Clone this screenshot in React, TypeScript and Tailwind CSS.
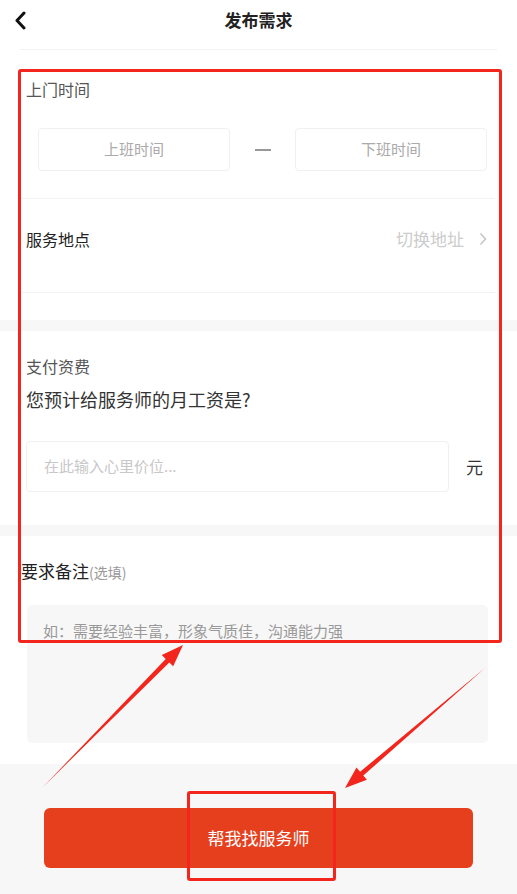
import React from 'react';

const font = { fontFamily: '"Noto Sans CJK SC", "Noto Sans", sans-serif' };

const App: React.FC = () => {
  return (
    <div className="relative w-[517px] h-[894px] bg-white overflow-hidden" style={font}>
      {/* Header */}
      <div className="relative h-[40px] flex items-center justify-center">
        <svg className="absolute left-[13px] top-[11px]" width="15" height="19" viewBox="0 0 15 19">
          <path d="M11 2 L4 9.5 L11 17" fill="none" stroke="#111" strokeWidth="3" strokeLinecap="round" strokeLinejoin="round" />
        </svg>
        <span className="text-[17px] font-bold text-[#222]">发布需求</span>
      </div>
      <div className="mt-[9px] mx-5 h-px bg-[#f2f2f2]" />

      {/* Visit time */}
      <div className="px-[26px] pt-[28px] text-[16px] leading-[22px] text-[#555]">上门时间</div>
      <div className="flex items-center pl-[38px] pr-[30px] mt-[28px]">
        <div className="w-[192px] h-[43px] rounded-[4px] border border-[#f0f0f0] flex items-center justify-center text-[15px] text-[#aaa]">
          上班时间
        </div>
        <div className="flex-1 flex justify-center">
          <div className="w-[16px] h-[2px] bg-[#999]" />
        </div>
        <div className="w-[192px] h-[43px] rounded-[4px] border border-[#f0f0f0] flex items-center justify-center text-[15px] text-[#aaa]">
          下班时间
        </div>
      </div>
      <div className="mt-[27px] mx-[22px] h-px bg-[#f2f2f2]" />

      {/* Location */}
      <div className="h-[93px] flex items-center justify-between pl-[26px] pr-[30px] pb-[13px]">
        <span className="text-[16px] text-[#222]">服务地点</span>
        <div className="flex items-center gap-[15px]">
          <span className="text-[17px] text-[#cccccc]">切换地址</span>
          <svg width="8" height="14" viewBox="0 0 8 14">
            <path d="M1.5 1.5 L6.5 7 L1.5 12.5" fill="none" stroke="#c4c4c4" strokeWidth="1.5" />
          </svg>
        </div>
      </div>
      <div className="mx-[22px] h-px bg-[#f2f2f2]" />
      <div className="h-[27px]" />
      <div className="h-[11px] bg-[#f7f7f7]" />

      {/* Payment */}
      <div className="px-[26px] pt-[24px] text-[16px] leading-[22px] text-[#555]">支付资费</div>
      <div className="px-[26px] mt-[10px] text-[18px] leading-[24px] text-[#333]">您预计给服务师的月工资是?</div>
      <div className="flex items-center pl-[26px] pr-[34px] mt-[30px]">
        <div className="w-[423px] h-[51px] rounded-[4px] border border-[#f0f0f0] flex items-center pl-[17px] text-[15px] text-[#c8c8c8]">
          在此输入心里价位...
        </div>
        <span className="ml-auto text-[17px] text-[#333]">元</span>
      </div>
      <div className="h-[33px]" />
      <div className="h-[11px] bg-[#f7f7f7]" />

      {/* Remarks */}
      <div className="pl-[21px] pt-[23px] leading-[24px]">
        <span className="text-[17px] text-[#222]">要求备注</span>
        <span className="text-[14px] text-[#999]">(选填)</span>
      </div>
      <div className="ml-[27px] mr-[29px] mt-[21px] h-[138px] rounded-[5px] bg-[#f7f7f7] pl-[16px] pt-[15px] text-[15px] text-[#999]">
        如：需要经验丰富，形象气质佳，沟通能力强
      </div>
      <div className="h-[21px]" />

      {/* Bottom */}
      <div className="bg-[#f7f7f7] h-[131px] pt-[44px] px-[44px]">
        <div className="w-[429px] h-[60px] rounded-[6px] bg-[#e63f1e] flex items-center justify-center text-[17px] text-white">
          帮我找服务师
        </div>
      </div>

      {/* Annotations */}
      <div className="absolute left-[18px] top-[69px] w-[484px] h-[574px] border-[3px] border-[#f2261c] rounded-[3px] pointer-events-none" />
      <div className="absolute left-[187px] top-[791px] w-[149px] h-[90px] border-[3px] border-[#f2261c] rounded-[3px] pointer-events-none" />
      <svg className="absolute left-0 top-0 pointer-events-none" width="517" height="894" viewBox="0 0 517 894">
        <polygon
          points="43,787 169.3,662.5 173.2,666.3 183,645 161.8,655.1 165.7,658.9"
          fill="#f2261c"
        />
        <polygon
          points="485,668 363.3,775.6 366.9,779.8 345,788 356.5,767.6 360.1,771.8"
          fill="#f2261c"
        />
      </svg>
    </div>
  );
};

export default App;
